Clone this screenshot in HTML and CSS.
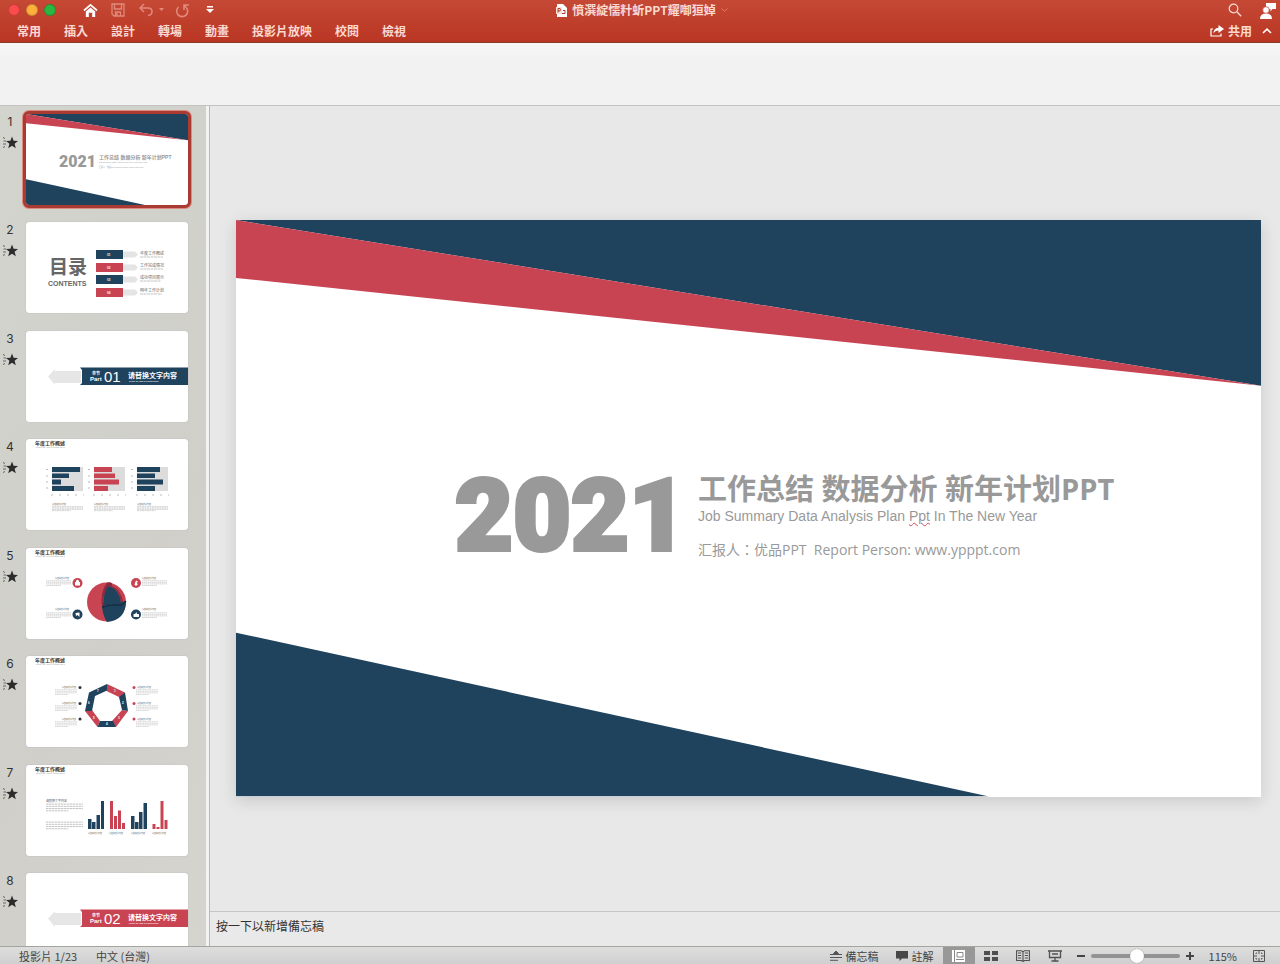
FILE: index.html
```html
<!DOCTYPE html>
<html lang="zh-Hant">
<head>
<meta charset="utf-8">
<meta name="viewport" content="width=device-width, initial-scale=1">
<title>簡報</title>
<link rel="stylesheet" href="styles.css">
</head>
<body>
<svg class="defs" aria-hidden="true">
  <symbol id="anim" viewBox="0 0 16 13"><path d="M10 0.5 11.6 4.8 16 5 12.600 7.800 13.800 12.200 10 9.700 6.200 12.200 7.400 7.800 4 5 8.400 4.800Z" fill="#2c2c2c"/><path d="M1 1.500 3 2.500M1.500 5H4M1 8H4M1 11.500 3 10.500" stroke="#666" stroke-width="1"/></symbol>
  <symbol id="cover" viewBox="0 0 1025 577" preserveAspectRatio="none"><path d="M0 0H1025V166Z" fill="#1f425d"/><path d="M0 0 1025 166 0 58Z" fill="#c94452"/><path d="M0 413 753 577H0Z" fill="#1f425d"/></symbol>
  <symbol id="lines" viewBox="0 0 30 9" preserveAspectRatio="none"><path d="M0 1H30M0 3H30M0 5H30M0 7H18" stroke="#aaa" stroke-width=".6" stroke-dasharray="2 .4"/></symbol>
</svg>
<div class="app">
  <header class="head">
    <div class="titlebar">
      <div class="left">
        <div class="lights"><button class="light close" aria-label="關閉"></button><button class="light min" aria-label="最小化"></button><button class="light max" aria-label="放大"></button></div>
        <button class="ic home" aria-label="首頁"><svg width="15" height="15" viewBox="0 0 16 16"><path d="M1 8 8 2 15 8" fill="none" stroke="#fff" stroke-width="1.800"/><path d="M3 9 8 4.800 13 9V15H9.800V10.500H6.200V15H3Z" fill="#fff"/></svg></button>
        <button class="ic save" aria-label="儲存"><svg width="14" height="14" viewBox="0 0 14 14"><path d="M1 1H13V13H3L1 11ZM3.500 1V6H10.500V1M4.500 13V9H9.500V13M6 10V13" fill="none" stroke="#e2897c" stroke-width="1.300"/></svg></button>
        <button class="ic undo" aria-label="復原"><svg width="14" height="14" viewBox="0 0 14 14"><path d="M5 1 1 5 5 9M1.500 5H9Q13 5 13 8.500T9 12.500" fill="none" stroke="#e2897c" stroke-width="1.500"/></svg></button>
        <button class="ic caret" aria-label="復原選項"><svg width="5" height="4" viewBox="0 0 5 4"><path d="M0 0H5L2.500 3Z" fill="#e2897c"/></svg></button>
        <button class="ic redo" aria-label="重做"><svg width="15" height="15" viewBox="0 0 15 15"><path d="M3.500 4A5.500 5.500 0 1 0 11 4.200L9.500 2.500M9 7V2H14" fill="none" stroke="#e2897c" stroke-width="1.600"/></svg></button>
        <button class="ic more" aria-label="自訂"><svg width="8" height="8" viewBox="0 0 8 8"><path d="M1 0H7V1.500H1ZM0 3H8L4 7Z" fill="#fff"/></svg></button>
      </div>
      <div class="doc"><svg width="11" height="13" viewBox="0 0 11 13"><path d="M1 0H7L11 4V13H1V10H5V3H1Z" fill="#fff"/><path d="M0 3H6V10H0Z" fill="#f7e0dc"/><path d="M2 8.500V4.500H4Q5.200 5.700 4 6.900H2M7 6.500H9V9.500H6" fill="none" stroke="#b93a27"/></svg><h1>憤潠綻懦籵蚚PPT耀啣狟婥</h1><svg width="7" height="4" viewBox="0 0 7 4"><path d="M.5 .5 3.500 3.200 6.500 .5" fill="none" stroke="#e2796b"/></svg></div>
      <div class="right"><button class="ic" aria-label="搜尋"><svg width="14" height="14" viewBox="0 0 14 14"><circle cx="5.500" cy="5.500" r="4.300" fill="none" stroke="#fbdcd6" stroke-width="1.200"/><path d="M8.800 8.800 13.200 13.200" stroke="#fbdcd6" stroke-width="1.300"/></svg></button><button class="ic" aria-label="帳戶"><svg width="16" height="17" viewBox="0 0 16 17"><path d="M6 1H16V7H12.500L10.500 9.500V7H6Z" fill="#fff"/><circle cx="6" cy="8" r="3.300" fill="#fff" stroke="#bf402e" stroke-width=".7"/><path d="M0 17Q0 11.500 6 11.500T12 17Z" fill="#fff"/></svg></button></div>
    </div>
    <div class="tabrow">
      <nav class="tabs"><button>常用</button><button>插入</button><button>設計</button><button>轉場</button><button>動畫</button><button>投影片放映</button><button>校閱</button><button>檢視</button></nav>
      <div class="share"><button><svg width="14" height="12" viewBox="0 0 14 12"><path d="M3 4H1V11H11V8.500" fill="none" stroke="#fff" stroke-width="1.200"/><path d="M8.500 0 14 4 8.500 8V5.500Q5 5.500 3.500 8.500 3.500 3.500 8.500 2.800Z" fill="#fff"/></svg>共用</button><button aria-label="收合功能區"><svg width="10" height="6" viewBox="0 0 10 6"><path d="M1 5 5 1.200 9 5" fill="none" stroke="#fff" stroke-width="1.600"/></svg></button></div>
    </div>
  </header>
  <div class="ribbon"></div>
  <div class="work">
    <aside class="side">
      <ol class="thumbs">
        <li class="on"><div class="mark"><span>1</span><svg width="16" height="13"><use href="#anim"/></svg></div>
          <button class="thumb" aria-label="投影片 1"><svg viewBox="0 0 162 91"><use href="#cover" width="162" height="91"/><text class="big" x="33" y="53" font-size="16">2021</text><text class="b g" x="73" y="45" font-size="5">工作总结 数据分析 新年计划PPT</text><text class="g" x="73" y="49" font-size="2">Job Summary Data Analysis Plan Ppt In The New Year</text><text class="g" x="73" y="54" font-size="2">汇报人：优品PPT  Report Person: www.ypppt.com</text></svg></button></li>
        <li><div class="mark"><span>2</span><svg width="16" height="13"><use href="#anim"/></svg></div>
          <button class="thumb" aria-label="投影片 2"><svg viewBox="0 0 162 91"><text class="b d" x="23" y="52" font-size="19">目录</text><text class="b d" x="22" y="64" font-size="7">CONTENTS</text>
          <path class="n" d="M70 28H97V37H70ZM70 53H97V62H70Z"/><path class="r" d="M70 41H97V50H70ZM70 66H97V75H70Z"/><path fill="#e4e4e4" d="M97 29.500H109L112 32.500 109 35.500H97ZM97 42.500H109L112 45.500 109 48.500H97ZM97 54.500H109L112 57.500 109 60.500H97ZM97 67.500H109L112 70.500 109 73.500H97Z"/>
          <g class="b w" font-size="3"><text x="81" y="34">01</text><text x="81" y="47">02</text><text x="81" y="59">03</text><text x="81" y="72">04</text></g>
          <g class="d" font-size="4"><text x="114" y="33">年度工作概述</text><text x="114" y="45">工作完成情况</text><text x="114" y="57">成功项目展示</text><text x="114" y="70">明年工作计划</text></g>
          <path d="M114 35H137M114 47H137M114 59H135M114 72H136" stroke="#aaa" stroke-width=".7" stroke-dasharray="3 .5"/></svg></button></li>
        <li><div class="mark"><span>3</span><svg width="16" height="13"><use href="#anim"/></svg></div>
          <button class="thumb" aria-label="投影片 3"><svg viewBox="0 0 162 91"><path d="M22 45.500 29 38V40H55V52H29V54Z" fill="#e6e6e6"/><path class="n" d="M54 36.500H162V54H54L56 52V39Z"/><g class="w"><text class="b" x="66" y="44" font-size="4">章节</text><text class="b" x="64" y="50" font-size="6">Part</text><text x="78" y="51" font-size="15">01</text><text class="b" x="102" y="47" font-size="7">请替换文字内容</text><text class="b" x="103" y="51" font-size="2">CLICK TO ADD CAPTION TEXT</text></g></svg></button></li>
        <li><div class="mark"><span>4</span><svg width="16" height="13"><use href="#anim"/></svg></div>
          <button class="thumb" aria-label="投影片 4"><svg viewBox="0 0 162 91"><text class="b h" x="9" y="6" font-size="5">年度工作概述</text><text class="g" x="10" y="9" font-size="2">CLICK TO ADD CAPTION TEXT</text>
          <path fill="#dcdcdc" d="M26 28H57V52H26ZM68 28H99V52H68ZM111 28H142V52H111Z"/>
          <path class="n" d="M26 28H54V33H26ZM26 34.500H43V39H26ZM26 40.500H35V45.500H26ZM26 47H48V52H26ZM111 28H134V33H111ZM111 34.500H129V39H111ZM111 40.500H137V45.500H111ZM111 47H129V52H111Z"/>
          <path class="r" d="M68 28H86V33H68ZM68 34.500H89V39H68ZM68 40.500H93V45.500H68ZM68 47H82V52H68Z"/>
          <path d="M20 30.500H24M20 37H24M20 43H24M20 49H24M62 30.500H66M62 37H66M62 43H66M62 49H66M105 30.500H109M105 37H109M105 43H109M105 49H109M25 56H58M67 56H100M110 56H143" stroke="#aaa" stroke-width=".8" stroke-dasharray="2 6"/>
          <g class="d" font-size="2"><text x="26" y="66">请替换文字内容</text><text x="68" y="66">请替换文字内容</text><text x="111" y="66">请替换文字内容</text></g>
          <use href="#lines" x="26" y="67" width="31" height="6"/><use href="#lines" x="68" y="67" width="31" height="6"/><use href="#lines" x="111" y="67" width="31" height="6"/></svg></button></li>
        <li><div class="mark"><span>5</span><svg width="16" height="13"><use href="#anim"/></svg></div>
          <button class="thumb" aria-label="投影片 5"><svg viewBox="0 0 162 91"><text class="b h" x="9" y="6" font-size="5">年度工作概述</text><text class="g" x="10" y="9" font-size="2">CLICK TO ADD CAPTION TEXT</text>
          <g class="d" font-size="2"><text x="29" y="31">请替换文字内容</text><text x="116" y="31">请替换文字内容</text><text x="29" y="62">请替换文字内容</text><text x="116" y="62">请替换文字内容</text></g>
          <use href="#lines" x="20" y="32" width="25" height="7"/><use href="#lines" x="116" y="32" width="25" height="7"/><use href="#lines" x="20" y="64" width="25" height="7"/><use href="#lines" x="116" y="64" width="25" height="7"/>
          <circle class="r" cx="51.500" cy="35" r="5"/><circle class="r" cx="110" cy="35" r="5"/><circle class="n" cx="51.500" cy="66.500" r="5"/><circle class="n" cx="110" cy="66.500" r="5"/>
          <g fill="#fff"><path d="M50 34V33Q51.500 30.500 53 33V34H54V37.500H49V34ZM110 32.500 112 33.500 110.500 35 112 36 110 38 108.500 36.500ZM49.500 65 53.500 64.500V69L51.500 67 50 68ZM107.500 66H109L110.500 64 111 66H113V69H107.500Z"/></g>
          <circle class="r" cx="80.500" cy="54" r="19.500"/><path d="M81 34.500Q73 53 81 73.500 77 66 76 57.500 76 43 81 34.500Z" fill="#8c2b3b"/><path d="M81 34.500Q87 33.500 86 37 98 42 99 54L95 55Q94 41 83 38 77 44 76 59 74 44 81 34.500Z" fill="#8c2b3b"/><path d="M86 37Q98 42 99 54L97 54Q95 42 86 38Z" class="r"/><path class="n" d="M77 58Q78 40 83 38 94 42 95 55Z"/><path class="n" d="M76 59 100 53Q100 72 81 74 77 68 76 59Z"/><path d="M76 59Q88 56 92 57T100 53" stroke="#142f45" stroke-width="1.500" fill="none"/></svg></button></li>
        <li><div class="mark"><span>6</span><svg width="16" height="13"><use href="#anim"/></svg></div>
          <button class="thumb" aria-label="投影片 6"><svg viewBox="0 0 162 91"><text class="b h" x="9" y="6" font-size="5">年度工作概述</text><text class="g" x="10" y="9" font-size="2">CLICK TO ADD CAPTION TEXT</text>
          <path class="r" d="M81 28 99 36.500 94 41.500 80.500 35ZM102 55 90 71 86 65 96 54ZM71.500 71 59 55 66 54 74 65Z"/><path class="n" d="M99 36.500 102 55 96 54 93 41ZM90 71H71.500L74 65H87ZM59 55 63 36.500 69 40 66 55ZM63 36.500 81 28 81 34.500 68 40.500Z"/>
          <g class="w b" font-size="3"><text x="88" y="36">1</text><text x="96" y="48">2</text><text x="92" y="63">3</text><text x="80" y="69">4</text><text x="67" y="63">5</text><text x="62" y="48">6</text><text x="71" y="36">7</text></g>
          <g class="h"><circle cx="54" cy="31.500" r="1.500"/><circle cx="54" cy="47.500" r="1.500"/><circle cx="54" cy="63" r="1.500"/></g><g class="r"><circle cx="108" cy="31.500" r="1.500"/><circle cx="108" cy="47.500" r="1.500"/><circle cx="108" cy="63" r="1.500"/></g>
          <g class="d" font-size="2"><text x="36" y="32">请替换文字内容</text><text x="36" y="48">请替换文字内容</text><text x="36" y="64">请替换文字内容</text><text x="111" y="32">请替换文字内容</text><text x="111" y="48">请替换文字内容</text><text x="111" y="64">请替换文字内容</text></g>
          <use href="#lines" x="29" y="33" width="22" height="7"/><use href="#lines" x="29" y="49" width="22" height="7"/><use href="#lines" x="29" y="65" width="22" height="7"/><use href="#lines" x="110" y="33" width="22" height="7"/><use href="#lines" x="110" y="49" width="22" height="7"/><use href="#lines" x="110" y="65" width="22" height="7"/></svg></button></li>
        <li><div class="mark"><span>7</span><svg width="16" height="13"><use href="#anim"/></svg></div>
          <button class="thumb" aria-label="投影片 7"><svg viewBox="0 0 162 91"><text class="b h" x="9" y="6" font-size="5">年度工作概述</text><text class="g" x="10" y="9" font-size="2">CLICK TO ADD CAPTION TEXT</text>
          <text class="d" x="20" y="37" font-size="3">请替换文字内容</text><use href="#lines" x="20" y="38" width="37" height="10"/><use href="#lines" x="20" y="56" width="37" height="10"/>
          <path class="n" d="M62 64V54H65.500V64ZM66 64V57H69.500V64ZM70.500 64V50H74V64ZM75 64V36H78V64ZM105 64V51H108.500V64ZM109 64V57H112.500V64ZM113 64V47H116.500V64ZM117.500 64V38H121V64Z"/><path class="r" d="M84 64V36H87V64ZM88 64V51H91V64ZM92 64V45.500H95V64ZM96 64V58H99V64ZM126.500 64V59H129.500V64ZM130.500 64V62H133.500V64ZM134.500 64V36H137.500V64ZM138.500 64V55H141.500V64Z"/>
          <g class="d" font-size="2"><text x="62" y="69">请替换文字内容</text><text x="83" y="69">请替换文字内容</text><text x="105" y="69">请替换文字内容</text><text x="126" y="69">请替换文字内容</text></g></svg></button></li>
        <li><div class="mark"><span>8</span><svg width="16" height="13"><use href="#anim"/></svg></div>
          <button class="thumb" aria-label="投影片 8"><svg viewBox="0 0 162 91"><path d="M22 45.500 29 38V40H55V52H29V54Z" fill="#e6e6e6"/><path class="r" d="M54 36.500H162V54H54L56 52V39Z"/><g class="w"><text class="b" x="66" y="44" font-size="4">章节</text><text class="b" x="64" y="50" font-size="6">Part</text><text x="78" y="51" font-size="15">02</text><text class="b" x="102" y="47" font-size="7">请替换文字内容</text><text class="b" x="103" y="51" font-size="2">CLICK TO ADD CAPTION TEXT</text></g></svg></button></li>
      </ol>
    </aside>
    <main class="stage">
      <div class="canvas">
        <section class="slide" lang="zh-Hans">
          <svg class="shapes" aria-hidden="true"><use href="#cover" width="100%" height="100%"/></svg>
          <div class="year">2021</div>
          <div class="copy"><h2>工作总结 数据分析 新年计划PPT</h2><p class="en">Job Summary Data Analysis Plan <span class="typo">Ppt</span> In The New Year</p><p class="by" lang="zh-Hant">汇报人：优品PPT&nbsp; Report Person: www.ypppt.com</p></div>
        </section>
      </div>
      <textarea class="notes" aria-label="備忘稿" placeholder="按一下以新增備忘稿"></textarea>
    </main>
  </div>
  <footer class="status">
    <div class="info"><span>投影片 1/23</span><span>中文 (台灣)</span></div>
    <div class="tools">
      <button class="lbl"><svg width="12" height="11" viewBox="0 0 12 11"><path d="M3.500 3.500 6 1 8.500 3.500ZM0 4.500H12M0 7.500H12M0 10.300H8" fill="#555" stroke="#555" stroke-width="1"/></svg>備忘稿</button>
      <button class="lbl cm"><svg width="12" height="10" viewBox="0 0 12 10"><path d="M0 0H12V7.500H6L3.500 10V7.500H0Z" fill="#484848"/></svg>註解</button>
      <button class="view sel" aria-label="標準模式"><svg width="13" height="12" viewBox="0 0 13 12"><path d="M0 0H13V12H0Z" fill="#fff"/><path d="M2.500 0V12M5 2.500H11V7H5ZM4 9.500H12" fill="none" stroke="#888"/></svg></button>
      <button class="view" aria-label="投影片瀏覽"><svg width="14" height="11" viewBox="0 0 14 11"><path d="M0 1H6V5H0ZM8 1H14V5H8ZM0 7H6V11H0ZM8 7H14V11H8Z" fill="#505050"/></svg></button>
      <button class="view" aria-label="閱讀檢視"><svg width="14" height="12" viewBox="0 0 14 12"><path d="M7 2 5.500 .700H.6V10.500H5.500L7 11.500 8.500 10.500H13.400V.7H8.500ZM7 2V11.500M2 3H5.200M2 5.500H5.200M2 8H5.200M8.800 3H12M8.800 5.500H12M8.800 8H12" fill="none" stroke="#505050" stroke-width="1.100"/></svg></button>
      <button class="view" aria-label="投影片放映"><svg width="14" height="12" viewBox="0 0 14 12"><path d="M0 1H14M1.500 1V7.500H12.500V1M7 7.500V11M3.500 11H10.500M4 4H10" fill="none" stroke="#505050" stroke-width="1.300"/></svg></button>
      <button class="zoomb" aria-label="縮小"><svg width="8" height="8"><path d="M0 4H8" stroke="#444" stroke-width="2"/></svg></button>
      <input type="range" min="0" max="100" value="52" aria-label="縮放">
      <button class="zoomb" aria-label="放大"><svg width="8" height="8"><path d="M0 4H8M4 0V8" stroke="#444" stroke-width="2"/></svg></button>
      <button class="pct">115%</button>
      <button class="fit" aria-label="配合視窗"><svg width="12" height="12" viewBox="0 0 12 12"><path d="M.5 .5H11.500V11.500H.5Z" fill="none" stroke="#555"/><path d="M6 1V4M6 8V11M1 6H4M8 6H11M3 4V3H4M8 3H9V4M9 8V9H8M4 9H3V8" fill="none" stroke="#555"/></svg></button>
    </div>
  </footer>
</div>
</body>
</html>
```
FILE: styles.css
```css
* { box-sizing: border-box; }
body { margin: 0; font-family: "Liberation Sans", "Noto Sans CJK TC", sans-serif; }
button { border: 0; padding: 0; background: none; color: inherit; font: inherit; display: flex; align-items: center; }
svg { display: block; flex: none; }
.defs { position: absolute; width: 0; height: 0; }
.app { height: 100vh; display: flex; flex-direction: column; overflow: hidden; background: #e8e8e8; }

.head { flex: none; color: #fbd9d2; background: linear-gradient(#c54935, #b93623); border-bottom: 1px solid #8c3a2e; font-family: "Noto Sans CJK TC", sans-serif; font-size: 12px; font-weight: 700; }
.titlebar { height: 20px; display: grid; grid-template-columns: 1fr auto 1fr; align-items: center; padding: 0 4px 0 8px; }
.left, .right, .doc, .lights, .tabrow, .tabs, .share { display: flex; align-items: center; }
.lights { gap: 6px; }
.light { width: 12px; height: 12px; border-radius: 50%; border: 1px solid #0003; }
.close { background: #fc4b4c; }
.min { background: #fdb03c; }
.max { background: #2bb641; }
.home { margin-left: 27px; }
.save { margin-left: 13px; }
.undo { margin-left: 14px; }
.caret { margin-left: 6px; }
.redo { margin-left: 11px; }
.more { margin-left: 16px; }
.doc { gap: 5px; line-height: 20px; }
.doc h1 { margin: 0; font-size: 12px; font-weight: 700; }
.right { justify-content: flex-end; gap: 18px; }
.tabrow { height: 22px; justify-content: space-between; padding: 0 8px 0 17px; line-height: 20px; }
.tabs { gap: 23px; }
.share { gap: 10px; }
.share button { gap: 4px; }

.ribbon { flex: none; height: 63px; background: linear-gradient(#f7f7f7, #f2f2f2 16px); border-bottom: 1px solid #c3c3c1; }
.work { flex: 1; min-height: 0; display: flex; }
.side { flex: none; width: 210px; overflow: hidden; background: linear-gradient(120deg, #d3d4ce, #d0cfca 60%, #d5d4cf); border-right: 1px solid #b9b9b9; box-shadow: inset -3px 0 #f3f3f3; }
.thumbs { list-style: none; margin: 0; padding: 8px 0 0; display: flex; flex-direction: column; gap: 17px; }
.thumbs li { display: flex; flex: none; }
.thumbs li:nth-child(even) { margin-bottom: 1px; }
.mark { width: 26px; padding-left: 2px; font: 12px/16px Inter, sans-serif; color: #333; display: flex; flex-direction: column; gap: 6px; }
.mark span { width: 16px; text-align: center; }
.thumb { width: 162px; height: 91px; border-radius: 3px; background: #fff; overflow: hidden; box-shadow: 0 0 1px #999; }
.thumb svg { width: 100%; height: 100%; font-family: "Liberation Sans", "Noto Sans CJK SC", sans-serif; }
.on .thumb { outline: 3px solid #a93b32; outline-offset: 0; box-shadow: 0 0 0 4px #dc8b80; }
.b { font-weight: 700; }
.g { fill: #999; }
.d { fill: #666; }
.h { fill: #333; }
.w { fill: #fff; }
.n { fill: #1f425d; }
.r { fill: #c94452; }
.big { fill: #999; font-family: Impact, Roboto, sans-serif; font-weight: 900; }

.stage { flex: 1; min-width: 0; display: flex; flex-direction: column; }
.canvas { flex: 1; min-height: 0; display: flex; align-items: center; padding: 0 19px 0 26px; }
.slide { position: relative; width: 100%; aspect-ratio: 16 / 9; background: #fff; color: #999; box-shadow: 0 4px 16px #0002; display: flex; align-items: center; gap: 24px; padding: 14px 0 0 219px; }
.shapes { position: absolute; inset: 0; width: 100%; height: 100%; }
.year, .copy { position: relative; }
.year { width: 219px; flex: none; font: 900 100px/96px Impact, Roboto, sans-serif; -webkit-text-stroke: 4px #999; }
.copy { white-space: nowrap; }
.copy h2 { margin: 0; font: 700 29px/34px "Open Sans", "Noto Sans CJK SC", sans-serif; }
.copy p { margin: 0; }
.en { font: 14px/20px "Liberation Sans", sans-serif; }
.typo { text-decoration: underline wavy #d04a58 1px; }
.copy .by { margin-top: 14px; font: 14px/20px "Open Sans", "Noto Sans CJK TC", sans-serif; }
.notes { flex: none; height: 35px; resize: none; border: 0; border-top: 1px solid #c6c6c6; background: #e9e9e9; padding: 4px 6px; font: 12px/20px "Noto Sans CJK TC", sans-serif; outline: 0; overflow: hidden; }
.notes::placeholder { color: #333; opacity: 1; }

.status { flex: none; height: 18px; display: flex; justify-content: space-between; padding: 0 15px 0 19px; border-top: 1px solid #a5a5a0; background: linear-gradient(#dedede, #cfcfcf); color: #444; font: 11px/18px "Noto Sans CJK TC", sans-serif; }
.info { display: flex; gap: 19px; }
.tools { display: flex; align-items: center; }
.tools button { height: 17px; }
.lbl { gap: 4px; }
.cm { margin: 0 9px 0 17px; }
.view { width: 32px; justify-content: center; }
.sel { background: #989898; }
.zoomb { margin: 0 6px; }
.tools input { width: 89px; height: 16px; margin: 0; appearance: none; background: none; }
.tools input::-webkit-slider-runnable-track { height: 4px; border-radius: 2px; background: #939393; }
.tools input::-webkit-slider-thumb { appearance: none; width: 14px; height: 14px; margin-top: -5px; border-radius: 50%; background: #fff; box-shadow: 0 0 1px #777; }
.pct { margin: 0 16px 0 9px; }
```
